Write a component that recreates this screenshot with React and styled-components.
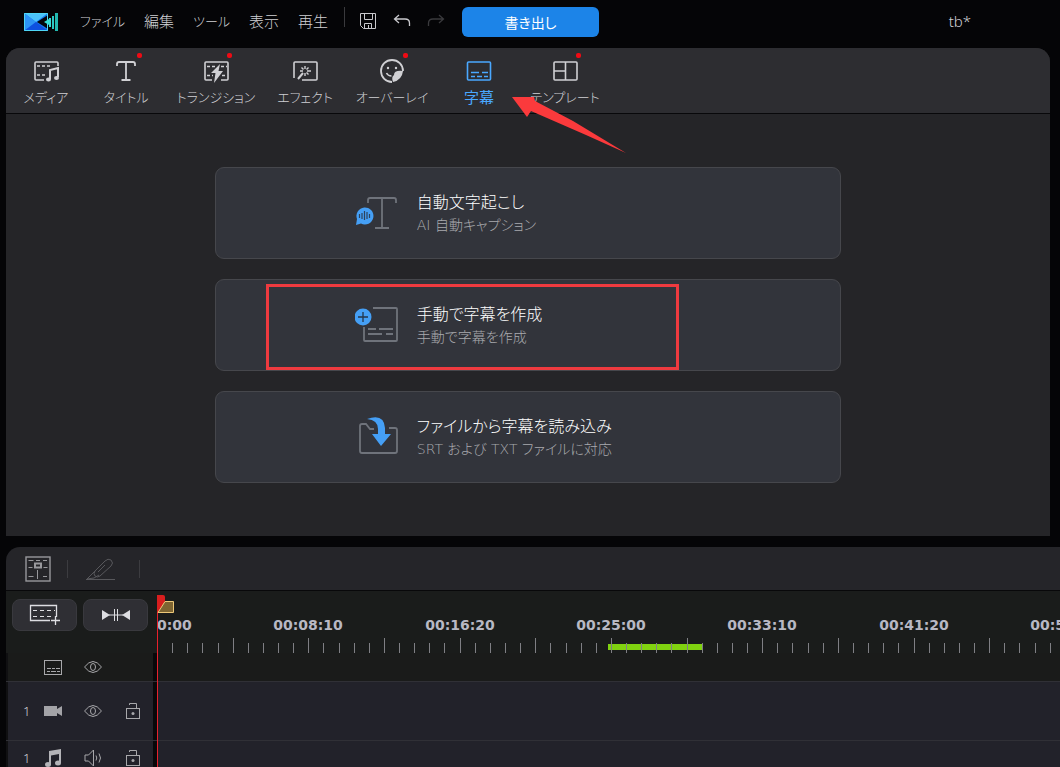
import React from 'react';
import styled, { createGlobalStyle } from 'styled-components';

const TICK = 15.13;
const TICK_COUNT = 200;

const menus = [
  { label: 'ファイル', kana: true },
  { label: '編集' },
  { label: 'ツール', kana: true },
  { label: '表示' },
  { label: '再生' },
];

const timecodes = [
  '00:00:00',
  '00:08:10',
  '00:16:20',
  '00:25:00',
  '00:33:10',
  '00:41:20',
  '00:50:00',
];

const Logo = () => (
  <svg width="35" height="20" viewBox="0 0 35 20" aria-hidden="true">
    <path d="M0 1h24v18H0z" fill="#1479ee" />
    <path d="M0 1h24L12 10z" fill="#4cc3fb" />
    <path d="M0 1l12 9L0 19z" fill="#2c93f5" />
    <path d="M0 19l12-9 12 9z" fill="#0e50e0" />
    <path d="M24 3v14l-11-7z" fill="#04060c" />
    <path d="M0.500 18.500h23v-17h-23z" fill="none" stroke="#4fd6f5" />
    <path d="M20 10l5-3v6z" fill="#37e0d8" />
    <path d="M25 6h2v9h-2z" fill="#35dcd6" />
    <path d="M28 4h2v13h-2z" fill="#2cc9c4" />
    <path d="M31 1h3v18h-3z" fill="#23b9b0" />
  </svg>
);

const SaveIcon = () => (
  <svg width="18" height="18" viewBox="0 0 18 18" fill="none" stroke="#c9c9cd">
    <path d="M1.500 1.500h15v15h-12l-3-3zM5.500 1.500v6h8v-6M5.500 16.500v-5h7v5M9.500 13v3" />
  </svg>
);

const UndoIcon = () => (
  <svg width="18" height="14" viewBox="0 0 18 14" fill="none" stroke="currentColor" strokeWidth="1.300">
    <path d="M6 1L1.500 5 6 9M1.500 5H12q4.500 0 4.500 4v3" />
  </svg>
);

const RedoIcon = () => (
  <svg width="18" height="14" viewBox="0 0 18 14" fill="none" stroke="currentColor" strokeWidth="1.300">
    <path d="M12 1l4.500 4L12 9M16.500 5H6q-4.500 0-4.500 4v3" />
  </svg>
);

const TabSvg = ({ children }) => (
  <svg width="28" height="24" viewBox="0 0 28 24" fill="none" stroke="currentColor" strokeWidth="1.600">
    {children}
  </svg>
);

const MediaIcon = () => (
  <TabSvg>
    <path d="M12 21H4q-1 0-1-1V4q0-1 1-1h21q1 0 1 1v3" />
    <path d="M5 7h15M5 16h8" strokeDasharray="3 2" />
    <path d="M18 20v-9l8-2v9" strokeWidth="2" />
    <ellipse cx="16.500" cy="20.500" rx="2.500" ry="2" fill="currentColor" stroke="none" />
    <ellipse cx="24.500" cy="19" rx="2.500" ry="2" fill="currentColor" stroke="none" />
  </TabSvg>
);

const TitleIcon = () => (
  <TabSvg>
    <path d="M5 7V5q0-2 2-2h14q2 0 2 2v2M14 3v18M9.500 21h9" strokeWidth="1.800" />
  </TabSvg>
);

const TransitionIcon = () => (
  <TabSvg>
    <path d="M10 21H4q-1 0-1-1V4q0-1 1-1h21q1 0 1 1v16q0 1-1 1h-6" />
    <path d="M5 7.500h8M19 7.500h6M5 16.500h6M20 16.500h5" strokeDasharray="3 2" />
    <path d="M18 5l-9 9h4.500l-1.500 10 9-12h-4.500z" fill="currentColor" stroke="none" />
  </TabSvg>
);

const EffectIcon = () => (
  <TabSvg>
    <path d="M3 19V4q0-1 1-1h21q1 0 1 1v16q0 1-1 1H11" />
    <path d="M7 20l5-6" strokeWidth="2" />
    <path d="M14 7v3M14 14v3M9 12h3M16 12h4M10.500 8.500l2 2M17.500 8.500l-2 2M15.500 13.500l2 2" strokeWidth="1.400" />
  </TabSvg>
);

const OverlayIcon = () => (
  <TabSvg>
    <path d="M14 23a11 11 0 1 1 11-11" strokeWidth="1.800" />
    <circle cx="10" cy="9" r="1.200" fill="currentColor" stroke="none" />
    <circle cx="18" cy="9" r="1.200" fill="currentColor" stroke="none" />
    <path d="M8.500 14q1.500 3 5 3" />
    <path d="M25 12q-9-1-9 4-3 2-1 7 9-2 10-11z" fill="currentColor" stroke="none" />
  </TabSvg>
);

const SubtitleIcon = () => (
  <TabSvg>
    <rect x="2.500" y="3" width="23" height="18" rx="1" />
    <path d="M6 13.500h8M17 13.500h6" />
    <path d="M6 17.500h4M12 17.500h5M19 17.500h4" />
  </TabSvg>
);

const TemplateIcon = () => (
  <TabSvg>
    <rect x="3" y="3" width="23" height="18" rx="1" />
    <path d="M14.500 3v18M3 12h11.500" />
  </TabSvg>
);

const tabs = [
  { label: 'メディア', Icon: MediaIcon, width: 80 },
  { label: 'タイトル', Icon: TitleIcon, width: 80, isNew: true },
  { label: 'トランジション', Icon: TransitionIcon, width: 100, isNew: true },
  { label: 'エフェクト', Icon: EffectIcon, width: 78 },
  { label: 'オーバーレイ', Icon: OverlayIcon, width: 96, isNew: true },
  { label: '字幕', Icon: SubtitleIcon, width: 78, active: true },
  { label: 'テンプレート', Icon: TemplateIcon, width: 94, isNew: true },
];

const CardSvg = ({ children }) => (
  <svg width="44" height="44" viewBox="0 0 44 44" fill="none" stroke="#6f737b" strokeWidth="1.800">
    {children}
  </svg>
);

const AutoCaptionIcon = () => (
  <CardSvg>
    <path d="M13 12V9q0-2 2-2h24q2 0 2 2v3M27 7v30M20 37h14" />
    <path d="M1 34l1-6a8.500 8.500 0 1 1 4 4.500z" fill="#459ff5" stroke="none" />
    <path d="M4.500 23v4M7 22v6M9.500 20v9M12 21v7M14.500 23v4" stroke="#2d435c" strokeWidth="1.200" />
  </CardSvg>
);

const ManualIcon = () => (
  <CardSvg>
    <path d="M18 5h23q1 0 1 1v31q0 1-1 1H10q-1 0-1-1V24" />
    <path d="M13 26h8M24 26h14M13 31h14M31 31h7" />
    <circle cx="8" cy="14" r="8.500" fill="#459ff5" stroke="none" />
    <path d="M3 14h10M8 9v10" stroke="#253548" strokeWidth="1.300" />
  </CardSvg>
);

const ImportIcon = () => (
  <CardSvg>
    <path d="M34 13h6q2 0 2 2v21q0 2-2 2H7q-2 0-2-2V11q0-2 2-2h4l4 5h4" />
    <path d="M12 4q17-6 18 9v6h6L26 31l-9-12h6v-5q0-9-11-10z" fill="#459ff5" stroke="none" />
  </CardSvg>
);

const cards = [
  { title: '自動文字起こし', note: 'AI 自動キャプション', Icon: AutoCaptionIcon },
  { title: '手動で字幕を作成', note: '手動で字幕を作成', Icon: ManualIcon, marked: true },
  { title: 'ファイルから字幕を読み込み', note: 'SRT および TXT ファイルに対応', Icon: ImportIcon },
];

const FitIcon = () => (
  <svg width="26" height="26" viewBox="0 0 26 26" fill="none" stroke="#98989c">
    <rect x="1" y="1" width="24" height="24" strokeWidth="1.400" />
    <path d="M3.500 4.500h5M11 4.500h4M18 4.500h4M3.500 11.500h4M18.500 11.500h4M3.500 20.500h5M18 20.500h4M12.500 14v9" />
    <rect x="10" y="7.500" width="6" height="4" strokeWidth="2" />
  </svg>
);

const BladeIcon = () => (
  <svg width="29" height="22" viewBox="0 0 29 22" fill="none" stroke="#58585c">
    <path d="M0 21.500h29M1 21l8-8M9 13l10-10q3-3 6-1 3 3 0 6L14 18q-3 2-5 0-2-2 0-5zM13 17q-4 4-12 4M12 14l7-7" />
  </svg>
);

const AddTrackIcon = () => (
  <svg width="32" height="22" viewBox="0 0 32 22" fill="none" stroke="#dedee2">
    <path d="M21 16.500H1.500v-15h26V13" strokeWidth="1.300" />
    <path d="M4 6.500h22M4 12.500h20" strokeDasharray="4 3" />
    <path d="M26.500 12v9M22 16.500h9" strokeWidth="1.300" />
  </svg>
);

const SnapIcon = () => (
  <svg width="28" height="14" viewBox="0 0 28 14" fill="none" stroke="#dedee2">
    <path d="M0 2v10l8-5zM28 2v10l-8-5z" fill="#dedee2" stroke="none" />
    <path d="M7 7h14M12.500 1v12M15.500 1v12" />
  </svg>
);

const CaptionTrackIcon = () => (
  <svg width="20" height="20" viewBox="0 0 20 20" fill="none" stroke="#a8a8ab">
    <rect x="1.500" y="3.500" width="17" height="14" />
    <path d="M4 11.500h4M9 11.500h3M13 11.500h4M4 14.500h3M8 14.500h5M14 14.500h3" />
  </svg>
);

const CameraIcon = () => (
  <svg width="20" height="20" viewBox="0 0 20 20" fill="#a3a3a7">
    <path d="M1 5h13v3l5-3v10l-5-3v3H1z" />
  </svg>
);

const NoteIcon = () => (
  <svg width="20" height="20" viewBox="0 0 20 20" fill="#b4b4b8">
    <path d="M6 3l12-2v14h-2V6L8 7.500V17H6z" />
    <ellipse cx="5" cy="16.500" rx="3" ry="2.500" />
    <ellipse cx="15" cy="15" rx="3" ry="2.500" />
  </svg>
);

const EyeIcon = () => (
  <svg width="20" height="20" viewBox="0 0 20 20" fill="none" stroke="#a8a8ab">
    <path d="M1.500 10Q10-1 18.500 10 10 21 1.500 10z" />
    <ellipse cx="10" cy="10" rx="2.500" ry="3.500" />
  </svg>
);

const SpeakerIcon = () => (
  <svg width="20" height="20" viewBox="0 0 20 20" fill="none" stroke="#a8a8ab">
    <path d="M2 7h3.500l5-5v16l-5-5H2zM13 7.500q1.500 2.500 0 5M16 5.500q3 4.500 0 9" />
  </svg>
);

const LockIcon = () => (
  <svg width="20" height="20" viewBox="0 0 20 20" fill="none" stroke="#a8a8ab">
    <rect x="3.500" y="7.500" width="13" height="10" />
    <path d="M6.500 4V2.500h7v5" />
    <circle cx="10" cy="12.500" r="1.500" fill="#a8a8ab" stroke="none" />
  </svg>
);

const Ticks = () => (
  <TickSvg aria-hidden="true">
    {Array.from({ length: TICK_COUNT }, (_, i) => {
      if (i === 0) return null;
      const x = Math.round(i * TICK) + 0.5;
      return <line key={i} x1={x} x2={x} y1={i % 5 === 0 ? 0 : 5} y2="15" stroke="#7f7f84" />;
    })}
  </TickSvg>
);

const tracks = [
  { name: '字幕トラック', height: 28, Kind: CaptionTrackIcon, Toggle: EyeIcon },
  { name: 'ビデオトラック', height: 59, number: 1, Kind: CameraIcon, Toggle: EyeIcon, lock: true },
  { name: 'オーディオトラック', height: 36, number: 1, Kind: NoteIcon, Toggle: SpeakerIcon, lock: true },
];

const App = () => {
  return (
    <Page>
      <GlobalStyle />
      <TitleBar>
        <Logo />
        <Menu>
          {menus.map(({ label, kana }) => (
            <MenuButton key={label} $kana={kana}>
              {label}
            </MenuButton>
          ))}
        </Menu>
        <BarDivider />
        <BarTools>
          <IconButton aria-label="保存">
            <SaveIcon />
          </IconButton>
          <IconButton aria-label="元に戻す">
            <UndoIcon />
          </IconButton>
          <IconButton aria-label="やり直し" $dim>
            <RedoIcon />
          </IconButton>
        </BarTools>
        <ExportButton>書き出し</ExportButton>
        <ProjectName>tb*</ProjectName>
      </TitleBar>

      <Panel>
        <Tabs>
          {tabs.map(({ label, Icon, width, active, isNew }) => (
            <Tab key={label} $width={width} $active={active}>
              <TabIcon>
                <Icon />
                {isNew && <Dot />}
              </TabIcon>
              {label}
            </Tab>
          ))}
          <Arrow width="116" height="60" viewBox="0 0 116 60" aria-hidden="true">
            <path d="M1 1h22l1 4 38 20 53 32-40-18-55-24-4 6z" fill="#fb3a3c" />
          </Arrow>
        </Tabs>
        <Cards>
          {cards.map(({ title, note, Icon, marked }) => (
            <Card key={title}>
              <Icon />
              <CardText>
                <CardTitle>{title}</CardTitle>
                <CardNote>{note}</CardNote>
              </CardText>
              {marked && <Marker />}
            </Card>
          ))}
        </Cards>
      </Panel>

      <Timeline>
        <Toolbar>
          <IconButton aria-label="全体を表示">
            <FitIcon />
          </IconButton>
          <ToolDivider />
          <IconButton aria-label="分割">
            <BladeIcon />
          </IconButton>
          <ToolDivider />
        </Toolbar>
        <Tracks>
          <RulerRow>
            <RulerTools>
              <ToolButton aria-label="トラックを追加">
                <AddTrackIcon />
              </ToolButton>
              <ToolButton aria-label="スナップ">
                <SnapIcon />
              </ToolButton>
            </RulerTools>
            <Ruler>
              {timecodes.map((code, i) => (
                <Timecode key={code} style={{ left: Math.round(i * TICK * 10) }}>
                  {code}
                </Timecode>
              ))}
              <Range />
              <Ticks />
            </Ruler>
          </RulerRow>
          {tracks.map(({ name, height, number, Kind, Toggle, lock }) => (
            <Track key={name} $height={height} $plain={!number}>
              <TrackHead>
                <TrackNumber>{number}</TrackNumber>
                <Kind />
                <IconButton aria-label={`${name} 表示`}>
                  <Toggle />
                </IconButton>
                {lock && (
                  <IconButton aria-label={`${name} ロック`}>
                    <LockIcon />
                  </IconButton>
                )}
              </TrackHead>
            </Track>
          ))}
          <Playhead>
            <svg width="18" height="20" viewBox="0 0 18 20" aria-hidden="true">
              <path d="M0 0h6q2 0 2 2v8l-8 8z" fill="#d81e1e" />
              <path d="M1 17.500L8 6.500h8.500v11z" fill="#7d6532" stroke="#ecc878" />
            </svg>
          </Playhead>
        </Tracks>
      </Timeline>
    </Page>
  );
};

export default App;

const GlobalStyle = createGlobalStyle`
  * {
    box-sizing: border-box;
  }
  body {
    margin: 0;
    background: #050507;
    color: #d0d0d4;
    font-family: 'Noto Sans', 'Noto Sans CJK JP', sans-serif;
    font-feature-settings: 'palt';
    font-size: 15px;
    font-weight: 300;
  }
  button {
    padding: 0;
    border: 0;
    background: none;
    color: inherit;
    font: inherit;
    font-feature-settings: inherit;
    white-space: nowrap;
    cursor: pointer;
  }
  svg {
    display: block;
    flex: none;
  }
`;

const Page = styled.div`
  display: flex;
  flex-direction: column;
  height: 100vh;
  overflow: hidden;
`;

const TitleBar = styled.header`
  display: flex;
  align-items: center;
  flex: none;
  height: 48px;
  padding: 0 89px 4px 24px;
`;

const Menu = styled.nav`
  display: flex;
  align-items: center;
  gap: 19px;
  margin-left: 21px;
`;

const MenuButton = styled.button`
  padding-bottom: 2px;
  font-size: ${props => (props.$kana ? 13 : 15)}px;
  line-height: 20px;
`;

const BarDivider = styled.span`
  width: 1px;
  height: 20px;
  margin: 0 14px 10px 16px;
  background: #3a3a3d;
`;

const BarTools = styled.div`
  display: flex;
  align-items: center;
  gap: 16px;
  padding-bottom: 2px;
`;

const IconButton = styled.button`
  color: ${props => (props.$dim ? '#3a3a3d' : '#c9c9cd')};
`;

const ExportButton = styled.button`
  width: 137px;
  height: 30px;
  margin-left: 17px;
  border-radius: 6px;
  background: #1c84e8;
  color: #ffffff;
  font-size: 14px;
  font-weight: 400;
`;

const ProjectName = styled.span`
  margin-left: auto;
  padding-bottom: 2px;
`;

const Panel = styled.main`
  flex: none;
  margin: 0 10px 11px 6px;
  border-radius: 14px 14px 0 0;
  background: #252528;
`;

const Tabs = styled.nav`
  position: relative;
  display: flex;
  height: 66px;
  border-bottom: 1px solid #08080a;
  border-radius: 14px 14px 0 0;
  background: #2d2d31;
`;

const Tab = styled.button`
  display: flex;
  flex-direction: column;
  align-items: center;
  gap: 4px;
  width: ${props => props.$width}px;
  padding-top: 11px;
  color: ${props => (props.$active ? '#4aa8ff' : '#d0d0d4')};
  font-size: ${props => (props.$active ? 15 : 13)}px;
  font-weight: ${props => (props.$active ? 400 : 300)};
  line-height: 20px;
`;

const TabIcon = styled.span`
  position: relative;
`;

const Dot = styled.span`
  position: absolute;
  top: -6px;
  right: -2px;
  width: 5px;
  height: 5px;
  border-radius: 2px;
  background: #f00a14;
`;

const Arrow = styled.svg`
  position: absolute;
  top: 48px;
  left: 505px;
  z-index: 1;
  pointer-events: none;
`;

const Cards = styled.div`
  display: flex;
  flex-direction: column;
  align-items: center;
  gap: 20px;
  padding: 53px 0;
`;

const Card = styled.button`
  position: relative;
  display: flex;
  align-items: center;
  gap: 18px;
  width: 60%;
  height: 92px;
  padding-left: 139px;
  border: 1px solid #46474c;
  border-radius: 9px;
  background: #32343b;
  text-align: left;
`;

const CardText = styled.span`
  display: flex;
  flex-direction: column;
`;

const CardTitle = styled.span`
  color: #ffffff;
  font-size: 16px;
  line-height: 24px;
`;

const CardNote = styled.span`
  color: #a9aaae;
  font-family: 'DejaVu Sans', 'Noto Sans CJK JP', sans-serif;
  font-size: 14px;
  line-height: 22px;
`;

const Marker = styled.span`
  position: absolute;
  top: 4px;
  bottom: 0;
  left: 50px;
  width: 413px;
  border: 3px solid #ee3a3f;
`;

const Timeline = styled.section`
  display: flex;
  flex: 1;
  flex-direction: column;
  min-height: 0;
  margin-left: 6px;
  border-radius: 14px 0 0 0;
  background: #252529;
`;

const Toolbar = styled.div`
  display: flex;
  align-items: center;
  flex: none;
  gap: 16px;
  height: 44px;
  padding-left: 19px;
  border-bottom: 1px solid #08080a;
`;

const ToolDivider = styled.span`
  width: 1px;
  height: 18px;
  margin-right: 2px;
  background: #3c3c40;

  &:last-child {
    margin-left: 8px;
  }
`;

const Tracks = styled.div`
  position: relative;
  flex: 1;
  min-height: 0;
  overflow: hidden;
  background: #1a1c1b;
`;

const RulerRow = styled.div`
  display: grid;
  grid-template-columns: 151px 1fr;
  height: 62px;
`;

const RulerTools = styled.div`
  display: flex;
  gap: 6px;
  padding: 8px 0 0 6px;
`;

const ToolButton = styled.button`
  display: flex;
  align-items: center;
  justify-content: center;
  width: 65px;
  height: 32px;
  border: 1px solid #39393e;
  border-radius: 8px;
  background: #2f2f34;
`;

const Ruler = styled.div`
  position: relative;
  overflow: hidden;
`;

const Timecode = styled.span`
  position: absolute;
  top: 26px;
  transform: translateX(-50%);
  color: #b8b8c4;
  font-family: 'DejaVu Sans', sans-serif;
  font-size: 14px;
  font-weight: bold;
  line-height: 16px;
`;

const Range = styled.span`
  position: absolute;
  top: 53px;
  left: 451px;
  width: 95px;
  height: 6px;
  background: #80d210;
`;

const TickSvg = styled.svg`
  position: absolute;
  top: 47px;
  left: 0;
  width: 100%;
  height: 15px;
`;

const Track = styled.div`
  height: ${props => props.$height}px;
  border-top: ${props => (props.$plain ? '0' : '1px solid #303036')};
  background: ${props => (props.$plain ? '#1a1b1a' : '#22222a')};
`;

const TrackHead = styled.div`
  display: flex;
  align-items: center;
  gap: 20px;
  width: 151px;
  height: 100%;
  padding: 0 0 1px 15px;
  border-right: 4px solid #08080a;
  border-left: 2px solid #101012;
`;

const TrackNumber = styled.span`
  width: 20px;
  margin-right: -20px;
  font-size: 13px;
`;

const Playhead = styled.div`
  position: absolute;
  top: 4px;
  bottom: 0;
  left: 151px;
  width: 1px;
  background: #e8202c;
`;
